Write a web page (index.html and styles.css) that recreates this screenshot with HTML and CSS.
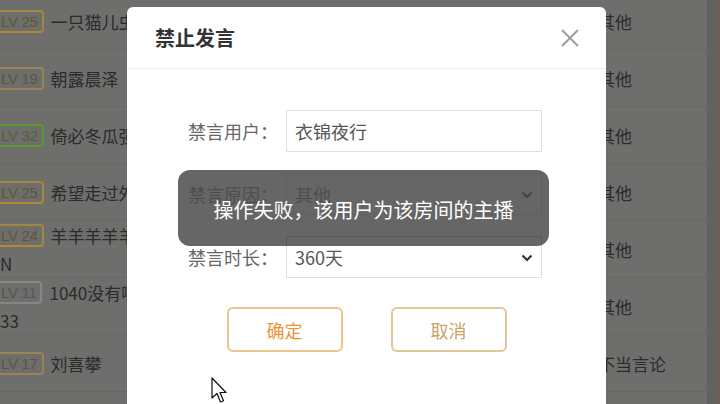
FILE: index.html
```html
<!DOCTYPE html>
<html lang="zh-CN">
<head>
<meta charset="utf-8">
<title>禁止发言</title>
<link rel="stylesheet" href="styles.css">
</head>
<body>
<div class="page">
  <div class="table">
    <div class="row">
      <div class="c-user"><div class="line"><span class="badge gold">LV 25</span><span class="name">一只猫儿虫虫虫</span></div></div>
      <div class="c-reason">其他</div>
    </div>
    <div class="row">
      <div class="c-user"><div class="line"><span class="badge tan">LV 19</span><span class="name">朝露晨泽</span></div></div>
      <div class="c-reason">其他</div>
    </div>
    <div class="row">
      <div class="c-user"><div class="line"><span class="badge green">LV 32</span><span class="name">倚必冬瓜强强</span></div></div>
      <div class="c-reason">其他</div>
    </div>
    <div class="row">
      <div class="c-user"><div class="line"><span class="badge gold">LV 25</span><span class="name">希望走过外面</span></div></div>
      <div class="c-reason">其他</div>
    </div>
    <div class="row">
      <div class="c-user"><div class="line"><span class="badge gold">LV 24</span><span class="name">羊羊羊羊羊羊</span></div><div class="line wrap">N</div></div>
      <div class="c-reason">其他</div>
    </div>
    <div class="row">
      <div class="c-user"><div class="line"><span class="badge gray">LV 11</span><span class="name">1040没有啊啊</span></div><div class="line wrap">33</div></div>
      <div class="c-reason">其他</div>
    </div>
    <div class="row">
      <div class="c-user"><div class="line"><span class="badge tan">LV 17</span><span class="name">刘喜攀</span></div></div>
      <div class="c-reason">不当言论</div>
    </div>
  </div>
  <div class="scroll"></div>
</div>

<div class="dialog">
  <div class="dlg-head">
    <span class="dlg-title">禁止发言</span>
    <svg class="close" width="18" height="18" viewBox="0 0 18 18"><path d="M1 1 L17 17 M17 1 L1 17" stroke="#9a9a9a" stroke-width="1.8" fill="none"/></svg>
  </div>
  <div class="dlg-body">
    <div class="form-row">
      <span class="label">禁言用户：</span>
      <div class="field">衣锦夜行</div>
    </div>
    <div class="form-row under">
      <span class="label">禁言原因：</span>
      <div class="field select">其他<svg class="chev" width="12" height="8" viewBox="0 0 12 8"><path d="M1.5 1.5 L6 6 L10.5 1.5" stroke="#aaa" stroke-width="2.2" fill="none"/></svg></div>
    </div>
    <div class="form-row">
      <span class="label">禁言时长：</span>
      <div class="field select">360天<svg class="chev" width="12" height="8" viewBox="0 0 12 8"><path d="M1.5 1.5 L6 6 L10.5 1.5" stroke="#333" stroke-width="2.2" fill="none"/></svg></div>
    </div>
    <div class="actions">
      <button class="btn ok">确定</button>
      <button class="btn cancel">取消</button>
    </div>
  </div>
</div>

<div class="toast">操作失败，该用户为该房间的主播</div>

<svg class="cursor" width="16" height="27" viewBox="0 0 16 27"><path d="M1 1 L1 21 L6 16.5 L9.5 25 L12.5 23.8 L9 15.5 L15 15.5 Z" fill="#fff" stroke="#111" stroke-width="1.2" stroke-linejoin="round"/></svg>
</body>
</html>
```
FILE: styles.css
```css
* { box-sizing: border-box; }
html, body { margin: 0; padding: 0; }
body {
  width: 720px;
  height: 404px;
  overflow: hidden;
  position: relative;
  font-family: "Noto Sans CJK SC", "Noto Sans", sans-serif;
  background: #6e6e6c;
}
.page {
  display: flex;
  width: 720px;
  height: 404px;
  overflow: hidden;
  background: #6e6e6c;
}
.table {
  flex: 1;
  margin-top: -7px;
  margin-left: -5px;
}
.row {
  display: grid;
  grid-template-columns: 603px 1fr;
  height: 57px;
  border-bottom: 1px solid #666665;
}
.c-user {
  display: flex;
  flex-direction: column;
  justify-content: center;
  color: #2b2b2b;
  font-size: 17px;
  white-space: nowrap;
  overflow: hidden;
}
.line {
  display: flex;
  align-items: center;
  height: 29px;
}
.line.wrap { padding-left: 5px; }
.badge {
  display: inline-block;
  height: 23px;
  line-height: 19px;
  padding: 0 4px;
  border: 2px solid #9c8448;
  border-radius: 4px;
  font-family: "Liberation Sans", sans-serif;
  font-size: 15px;
  letter-spacing: -0.3px;
  color: #5e5636;
  margin-right: 7px;
}
.badge.gold { border-color: #a0883e; color: #5e5634; border-bottom-color: #b08a32; }
.badge.tan { border-color: #9a8454; color: #5c5440; }
.badge.green { border-color: #5c9a2c; color: #4e6236; }
.badge.gray { border-color: #868684; color: #555553; }
.name { color: #2b2b2b; }
.c-reason {
  display: flex;
  align-items: center;
  color: #2b2b2b;
  font-size: 17px;
  white-space: nowrap;
}
.scroll {
  width: 13px;
  height: 404px;
  background: #626261;
  border-right: 1px solid #8a5046;
}

.dialog {
  position: absolute;
  left: 127px;
  top: 7px;
  width: 479px;
  height: 397px;
  background: #fff;
  border-radius: 6px 6px 0 0;
}
.dlg-head {
  height: 62px;
  display: flex;
  align-items: center;
  justify-content: space-between;
  padding: 0 27px 0 28px;
  border-bottom: 1px solid #ededed;
}
.dlg-title {
  font-size: 20px;
  font-weight: 600;
  color: #333;
}
.dlg-body {
  padding: 41px 0 0 61px;
}
.form-row {
  display: flex;
  align-items: center;
  height: 42px;
  margin-bottom: 21px;
}
.label {
  width: 98px;
  font-size: 18px;
  color: #666;
}
.field {
  width: 256px;
  height: 42px;
  border: 1px solid #dedede;
  padding: 0 8px;
  display: flex;
  align-items: center;
  font-size: 18px;
  color: #555;
}
.form-row.under .label,
.form-row.under .field { color: #c4c4c4; }
.form-row.under .field { border-color: #eeeeee; }
.field.select { justify-content: space-between; padding-right: 8px; }
.chev { margin-top: 1px; }
.actions {
  display: flex;
  justify-content: center;
  gap: 48px;
  margin: 29px 0 0 -61px;
}
.btn {
  width: 116px;
  height: 45px;
  background: #fff;
  border: 2px solid #ecc894;
  border-radius: 6px;
  font-family: "Noto Sans CJK SC", sans-serif;
  font-size: 18px;
  padding: 0;
}
.btn.ok { color: #ec9436; border-color: #eec48a; }
.btn.cancel { color: #caa26a; border-color: #e2c598; }

.toast {
  position: absolute;
  left: 178px;
  top: 170px;
  width: 371px;
  height: 76px;
  border-radius: 12px;
  background: rgba(0, 0, 0, 0.6);
  color: #fff;
  font-size: 20px;
  display: flex;
  align-items: center;
  justify-content: center;
  padding-top: 2px;
}
.cursor {
  position: absolute;
  left: 211px;
  top: 377px;
}
```
